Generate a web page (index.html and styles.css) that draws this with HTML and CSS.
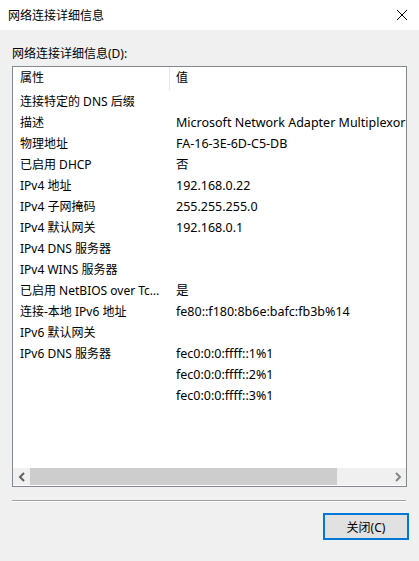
FILE: index.html
```html
<!DOCTYPE html>
<html lang="zh-CN">
<head>
    <meta charset="UTF-8">
    <title>网络连接详细信息</title>
    <link rel="stylesheet" href="styles.css">
</head>
<body>
<div class="win">
    <div class="titlebar">
        <span class="title">网络连接详细信息</span>
        <svg class="close" width="12" height="12" viewBox="0 0 12 12">
            <path d="M1 1L11 11M11 1L1 11" stroke="#000" stroke-width="1" fill="none"/>
        </svg>
    </div>
    <div class="body">
        <div class="label">网络连接详细信息(D):</div>
        <div class="list">
            <div class="rows">
                <div class="row head">
                    <div class="c1">属性</div>
                    <div class="c2">值</div>
                </div>
                <div class="row"><div class="c1">连接特定的 DNS 后缀</div><div class="c2"></div></div>
                <div class="row"><div class="c1">描述</div><div class="c2">Microsoft Network Adapter Multiplexor</div></div>
                <div class="row"><div class="c1">物理地址</div><div class="c2">FA-16-3E-6D-C5-DB</div></div>
                <div class="row"><div class="c1">已启用 DHCP</div><div class="c2">否</div></div>
                <div class="row"><div class="c1">IPv4 地址</div><div class="c2">192.168.0.22</div></div>
                <div class="row"><div class="c1">IPv4 子网掩码</div><div class="c2">255.255.255.0</div></div>
                <div class="row"><div class="c1">IPv4 默认网关</div><div class="c2">192.168.0.1</div></div>
                <div class="row"><div class="c1">IPv4 DNS 服务器</div><div class="c2"></div></div>
                <div class="row"><div class="c1">IPv4 WINS 服务器</div><div class="c2"></div></div>
                <div class="row"><div class="c1">已启用 NetBIOS over Tcpip</div><div class="c2">是</div></div>
                <div class="row"><div class="c1">连接-本地 IPv6 地址</div><div class="c2">fe80::f180:8b6e:bafc:fb3b%14</div></div>
                <div class="row"><div class="c1">IPv6 默认网关</div><div class="c2"></div></div>
                <div class="row"><div class="c1">IPv6 DNS 服务器</div><div class="c2">fec0:0:0:ffff::1%1</div></div>
                <div class="row"><div class="c1"></div><div class="c2">fec0:0:0:ffff::2%1</div></div>
                <div class="row"><div class="c1"></div><div class="c2">fec0:0:0:ffff::3%1</div></div>
            </div>
            <div class="hscroll">
                <div class="arrow">
                    <svg width="8" height="10" viewBox="0 0 8 10"><path d="M6 1L2 5L6 9" stroke="#606060" stroke-width="2" fill="none"/></svg>
                </div>
                <div class="thumb"></div>
                <div class="track"></div>
                <div class="arrow">
                    <svg width="8" height="10" viewBox="0 0 8 10"><path d="M2 1L6 5L2 9" stroke="#858585" stroke-width="2" fill="none"/></svg>
                </div>
            </div>
        </div>
        <div class="sep"></div>
        <div class="footer">
            <button class="btn">关闭(C)</button>
        </div>
    </div>
</div>
</body>
</html>
```

FILE: styles.css
```css
*{
    margin: 0;
    padding: 0;
    box-sizing: border-box;
}
body{
    font-family: "Noto Sans", "Noto Sans CJK SC", sans-serif;
    font-size: 12px;
    color: #000;
    background: #f0f0f0;
}
.win{
    width: 419px;
    height: 561px;
    display: flex;
    flex-direction: column;
}
.titlebar{
    height: 30px;
    background: #fff;
    display: flex;
    align-items: center;
    justify-content: space-between;
    padding: 0 8px 0 8px;
}
.title{
    font-size: 12px;
}
.close{
    margin-right: 3px;
}
.body{
    flex: 1;
    padding: 15px 12px 0 12px;
}
.label{
    height: 21px;
    line-height: 18px;
}
.list{
    width: 395px;
    height: 421px;
    border: 1px solid #828790;
    background: #fff;
    display: flex;
    flex-direction: column;
}
.rows{
    flex: 1;
    overflow: hidden;
}
.row{
    display: flex;
    height: 21px;
    line-height: 21px;
    white-space: nowrap;
}
.row.head{
    height: 24px;
    line-height: 22px;
}
.c1{
    width: 157px;
    flex: none;
    padding-left: 7px;
    padding-right: 4px;
    overflow: hidden;
    text-overflow: ellipsis;
}
.c2{
    flex: 1;
    padding-left: 6px;
    font-size: 12.5px;
    overflow: hidden;
}
.head .c1{
    border-right: 1px solid #e5e5e5;
    height: 23px;
}
.head .c2{
    font-size: 12px;
}
.hscroll{
    height: 17px;
    display: flex;
    background: #f0f0f0;
    margin-bottom: 1px;
}
.arrow{
    width: 17px;
    display: flex;
    align-items: center;
    justify-content: center;
}
.thumb{
    width: 307px;
    background: #cdcdcd;
}
.track{
    flex: 1;
}
.sep{
    width: 394px;
    margin-top: 13px;
    border-top: 1px solid #a0a0a0;
    border-bottom: 1px solid #fff;
}
.footer{
    display: flex;
    justify-content: flex-end;
    padding: 11px 0 0 0;
}
.btn{
    width: 86px;
    height: 27px;
    margin-right: -2px;
    background: #e1e1e1;
    border: 2px solid #0078d7;
    font-family: "Noto Sans", "Noto Sans CJK SC", sans-serif;
    font-size: 12px;
    color: #000;
}
```
